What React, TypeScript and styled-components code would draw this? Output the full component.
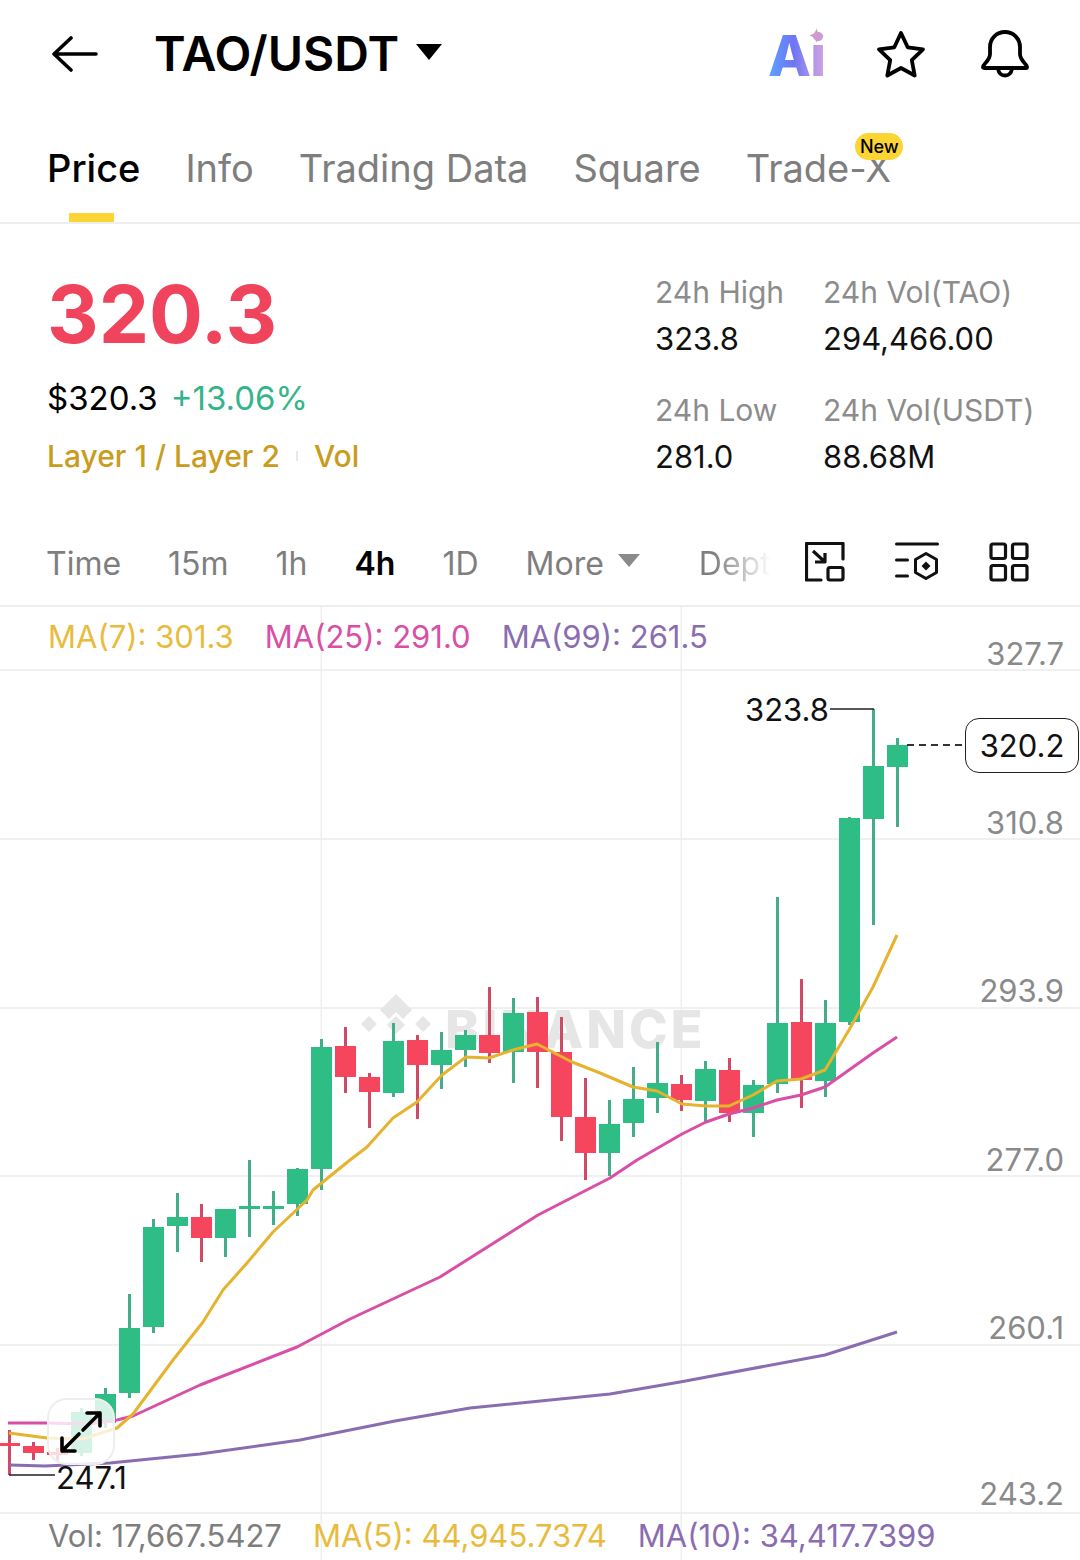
import styled, { createGlobalStyle } from "styled-components";

const GREEN = "#2EBD85";
const RED = "#F6465D";
const GREY = "#7E7E7E";

const GlobalStyle = createGlobalStyle`
  html, body {
    margin: 0;
    padding: 0;
    background: #fff;
  }
  * {
    box-sizing: border-box;
  }
`;

// top, bottom of the body, top, bottom of the wick, colour
type Candle = [number, number, number, number, "g" | "r"];

const candles: Candle[] = [
  [1443, 1446, 1430, 1475, "r"],
  [1446, 1453, 1442, 1460, "r"],
  [1452, 1455, 1448, 1462, "r"],
  [1412, 1453, 1408, 1456, "g"],
  [1394, 1423, 1388, 1428, "g"],
  [1328, 1393, 1294, 1398, "g"],
  [1227, 1327, 1219, 1333, "g"],
  [1217, 1226, 1193, 1252, "g"],
  [1217, 1238, 1204, 1262, "r"],
  [1209, 1238, 1209, 1257, "g"],
  [1206, 1209, 1160, 1237, "g"],
  [1206, 1209, 1191, 1225, "g"],
  [1169, 1204, 1168, 1216, "g"],
  [1047, 1169, 1039, 1190, "g"],
  [1046, 1077, 1027, 1093, "r"],
  [1077, 1092, 1073, 1128, "r"],
  [1041, 1093, 1023, 1097, "g"],
  [1040, 1065, 1035, 1119, "r"],
  [1050, 1065, 1032, 1089, "g"],
  [1035, 1050, 1030, 1067, "g"],
  [1035, 1053, 987, 1063, "r"],
  [1013, 1052, 998, 1083, "g"],
  [1012, 1052, 997, 1088, "r"],
  [1052, 1117, 1017, 1141, "r"],
  [1117, 1153, 1078, 1180, "r"],
  [1124, 1153, 1100, 1176, "g"],
  [1099, 1123, 1067, 1137, "g"],
  [1083, 1098, 1042, 1113, "g"],
  [1084, 1100, 1075, 1111, "r"],
  [1069, 1101, 1061, 1122, "g"],
  [1070, 1113, 1058, 1122, "r"],
  [1085, 1113, 1080, 1137, "g"],
  [1023, 1084, 897, 1093, "g"],
  [1022, 1080, 979, 1108, "r"],
  [1023, 1081, 1000, 1097, "g"],
  [818, 1022, 817, 1025, "g"],
  [766, 819, 709, 925, "g"],
  [745, 767, 738, 827, "g"],
];

const ma7 =
  "9,1433 47,1438 82,1439 117,1428 133,1414 173,1360 203,1322 223,1290 247,1263 273,1232 307,1200 313,1190 350,1160 367,1147 393,1118 417,1102 442,1075 466,1057 489,1058 513,1050 537,1044 572,1062 600,1073 633,1087 657,1091 682,1104 706,1106 729,1106 753,1095 777,1081 801,1079 825,1070 849,1030 873,987 897,935";
const ma25 =
  "8,1423 45,1423 90,1424 117,1420 133,1416 200,1385 297,1347 350,1319 440,1277 538,1215 610,1178 637,1160 682,1134 706,1122 729,1114 753,1108 777,1100 801,1095 825,1087 849,1070 873,1053 897,1037";
const ma99 =
  "10,1465 45,1466 110,1463 200,1454 300,1440 395,1421 470,1408 610,1394 680,1382 825,1355 897,1332";

const gridRows = [670, 839, 1008, 1176, 1345, 1513];
const gridCols = [321, 681];

const axisLabels = [
  { y: 654, text: "327.7" },
  { y: 823, text: "310.8" },
  { y: 991, text: "293.9" },
  { y: 1160, text: "277.0" },
  { y: 1328, text: "260.1" },
  { y: 1494, text: "243.2" },
];

const intervals = [
  { label: "Time" },
  { label: "15m" },
  { label: "1h" },
  { label: "4h", active: true },
  { label: "1D" },
];

const App = () => {
  return (
    <Page>
      <GlobalStyle />
      <Header>
        <BackIcon viewBox="0 0 46 36" fill="none">
          <path
            d="M44 18H2M19 2 2 18l17 16"
            stroke="#000"
            strokeWidth="3.6"
            strokeLinecap="round"
            strokeLinejoin="round"
          />
        </BackIcon>
        <Title>TAO/USDT</Title>
        <Caret />
        <HeaderIcons>
          <AiBadge>
            <AiText>Ai</AiText>
            <Sparkle viewBox="0 0 16 16">
              <path
                d="M8 0c.8 4.4 2.6 6.6 8 8-5.4 1.400-7.200 3.600-8 8-.8-4.400-2.600-6.600-8-8 5.400-1.400 7.200-3.600 8-8Z"
                fill="#D49BC8"
              />
            </Sparkle>
          </AiBadge>
          <HeaderIcon viewBox="0 0 54 54" fill="none">
            <path
              d="M27 6l6.700 14.300 15.300 2-11.200 10.800 2.900 15.400L27 41l-13.700 7.500 2.900-15.400L5 22.300l15.300-2L27 6Z"
              stroke="#000"
              strokeWidth="3.800"
              strokeLinejoin="round"
            />
          </HeaderIcon>
          <HeaderIcon viewBox="0 0 54 54" fill="none">
            <path
              d="M5 40c0-1.500 1-2.400 2.500-4 2.200-2.400 4.500-5 4.500-9v-7C12 11.500 18.500 5 27 5s15 6.500 15 15v7c0 4 2.300 6.600 4.500 9 1.500 1.600 2.500 2.500 2.500 4 0 .6-.4 1-1 1H6c-.6 0-1-.4-1-1Z"
              stroke="#000"
              strokeWidth="3.800"
              strokeLinejoin="round"
            />
            <path
              d="M20 42c.8 4 3.400 6.500 7 6.500s6.200-2.500 7-6.500"
              stroke="#000"
              strokeWidth="3.800"
            />
          </HeaderIcon>
        </HeaderIcons>
      </Header>

      <Tabs>
        <Tab $active>Price</Tab>
        <Tab>Info</Tab>
        <Tab>Trading Data</Tab>
        <Tab>Square</Tab>
        <Tab>
          Trade-X
          <NewBadge>New</NewBadge>
        </Tab>
      </Tabs>

      <Summary>
        <SummaryLeft>
          <LastPrice>320.3</LastPrice>
          <FiatRow>
            <span>$320.3</span>
            <Change>+13.06%</Change>
          </FiatRow>
          <TagRow>
            <span>Layer 1 / Layer 2</span>
            <TagDivider />
            <span>Vol</span>
          </TagRow>
        </SummaryLeft>
        <StatsGrid>
          <Stat>
            <StatLabel>24h High</StatLabel>
            <StatValue>323.8</StatValue>
          </Stat>
          <Stat>
            <StatLabel>24h Vol(TAO)</StatLabel>
            <StatValue>294,466.00</StatValue>
          </Stat>
          <Stat>
            <StatLabel>24h Low</StatLabel>
            <StatValue>281.0</StatValue>
          </Stat>
          <Stat>
            <StatLabel>24h Vol(USDT)</StatLabel>
            <StatValue>88.68M</StatValue>
          </Stat>
        </StatsGrid>
      </Summary>

      <IntervalBar>
        <Intervals>
          {intervals.map((item) => (
            <Interval key={item.label} $active={item.active}>
              {item.label}
            </Interval>
          ))}
          <Interval>
            More
            <MoreCaret />
          </Interval>
          <DepthLabel>Dept</DepthLabel>
        </Intervals>
        <ToolIcons>
          <ToolIcon viewBox="0 0 40 40" fill="none">
            <path
              d="M38 17V1.500H1.500V38H16"
              stroke="#111"
              strokeWidth="3.200"
              strokeLinecap="round"
              strokeLinejoin="round"
            />
            <rect x="23" y="25.500" width="15" height="12.500" rx="2" stroke="#111" strokeWidth="3.200" />
            <path
              d="M8 9l12 11M20 11v9H10"
              stroke="#111"
              strokeWidth="3.200"
              strokeLinejoin="round"
            />
          </ToolIcon>
          <ToolIcon viewBox="0 0 44 40" $width={44} fill="none">
            <path
              d="M1.500 2h41M1.500 18h11M1.500 34h11"
              stroke="#111"
              strokeWidth="3"
              strokeLinecap="round"
            />
            <path
              d="M31 11.500l10.500 6v13L31 36.500l-10.500-6v-13L31 11.500Z"
              stroke="#111"
              strokeWidth="3"
              strokeLinejoin="round"
            />
            <path d="M31 19.500l4.500 4.500-4.500 4.500-4.500-4.500 4.500-4.500Z" fill="#111" />
          </ToolIcon>
          <ToolIcon viewBox="0 0 40 40" fill="none">
            <rect x="2" y="2" width="14.500" height="14.500" rx="2" stroke="#111" strokeWidth="3.200" />
            <rect x="23.500" y="2" width="14.500" height="14.500" rx="2" stroke="#111" strokeWidth="3.200" />
            <rect x="2" y="23.500" width="14.500" height="14.500" rx="2" stroke="#111" strokeWidth="3.200" />
            <rect x="23.500" y="23.500" width="14.500" height="14.500" rx="2" stroke="#111" strokeWidth="3.200" />
          </ToolIcon>
        </ToolIcons>
      </IntervalBar>

      <ChartSection>
        <ChartCanvas viewBox="0 605 1080 955" fill="none">
          <rect x="0" y="605" width="1080" height="2" fill="#EEEEEE" />
          {gridRows.map((y) => (
            <rect key={y} x="0" y={y - 1} width="1080" height="2" fill="#F0F0F0" />
          ))}
          {gridCols.map((x) => (
            <rect key={x} x={x - 0.5} y="607" width="1.500" height="953" fill="#EFEFEF" />
          ))}

          <g fill="#E6E6E6">
            <path d="M396 994l16 16-9 9-7-7-7 7-9-9 16-16Z" />
            <path d="M396 1016l9 9-9 9-9-9 9-9Z" />
            <path d="M369 1016l8 8-8 8-8-8 8-8Z" />
            <path d="M423 1016l8 8-8 8-8-8 8-8Z" />
            <path d="M382 1037l7 7 7-7 7 7 7-7 0 0 9 9-23 0-23 0 9-9Z" opacity="0" />
          </g>
          <Watermark x="445" y="1048">
            BINANCE
          </Watermark>

          {candles.map(([top, bottom, wickTop, wickBottom, side], i) => {
            const cx = 9.5 + i * 24;
            return (
              <g key={i}>
                <rect
                  x={cx - 1.5}
                  y={wickTop}
                  width="3"
                  height={wickBottom - wickTop}
                  fill={side === "g" ? "#43AD8A" : "#CF4A66"}
                />
                <rect
                  x={cx - 10.5}
                  y={top}
                  width="21"
                  height={bottom - top}
                  fill={side === "g" ? GREEN : RED}
                />
              </g>
            );
          })}

          <polyline points={ma99} stroke="#8A6DB1" strokeWidth="3" strokeLinejoin="round" />
          <polyline points={ma25} stroke="#D94FA6" strokeWidth="3" strokeLinejoin="round" />
          <polyline points={ma7} stroke="#E6B32F" strokeWidth="3" strokeLinejoin="round" />

          <path d="M830 709h44M9 1475h46" stroke="#222" strokeWidth="1.500" />
          <path d="M907 745h56" stroke="#333" strokeWidth="2" strokeDasharray="7 5" />

          {axisLabels.map((item) => (
            <AxisText key={item.text} x="1064" y={item.y + 11}>
              {item.text}
            </AxisText>
          ))}
          <MarkText x="745" y="721">
            323.8
          </MarkText>
          <MarkText x="56" y="1489">
            247.1
          </MarkText>
        </ChartCanvas>

        <Legend>
          <LegendItem $color="#E9BB3C">MA(7): 301.3</LegendItem>
          <LegendItem $color="#D94FA6">MA(25): 291.0</LegendItem>
          <LegendItem $color="#8A6DB1">MA(99): 261.5</LegendItem>
        </Legend>

        <LastTag>320.2</LastTag>

        <ExpandButton>
          <svg width="48" height="48" viewBox="0 0 48 48" fill="none">
            <path
              d="M26 22 43 5M30 5h13v13M5 43l17-17M5 30v13h13"
              stroke="#000"
              strokeWidth="3.600"
              strokeLinecap="round"
              strokeLinejoin="round"
            />
          </svg>
        </ExpandButton>

        <VolumeRow>
          <LegendItem $color={GREY}>Vol: 17,667.5427</LegendItem>
          <LegendItem $color="#E9BB3C">MA(5): 44,945.7374</LegendItem>
          <LegendItem $color="#8A6DB1">MA(10): 34,417.7399</LegendItem>
        </VolumeRow>
      </ChartSection>
    </Page>
  );
};

export default App;

const Page = styled.div`
  display: flex;
  flex-direction: column;
  width: 1080px;
  height: 1560px;
  overflow: hidden;
  background: #fff;
  font-family: Inter, "Liberation Sans", sans-serif;
  color: #000;
`;

const Header = styled.header`
  display: flex;
  align-items: center;
  height: 108px;
  padding: 0 48px 0 52px;
`;

const BackIcon = styled.svg`
  width: 46px;
  height: 36px;
  flex-shrink: 0;
`;

const Title = styled.h1`
  margin: 0 0 0 56px;
  font-size: 48px;
  font-weight: 600;
  line-height: 60px;
`;

const Caret = styled.span`
  width: 0;
  height: 0;
  margin: -4px 0 0 17px;
  border-left: 13px solid transparent;
  border-right: 13px solid transparent;
  border-top: 16px solid #000;
`;

const HeaderIcons = styled.div`
  display: flex;
  align-items: center;
  gap: 50px;
  margin-left: auto;
`;

const AiBadge = styled.div`
  position: relative;
  width: 56px;
  height: 54px;
  display: flex;
  align-items: flex-end;
`;

const AiText = styled.span`
  font-size: 56px;
  font-weight: 800;
  line-height: 50px;
  letter-spacing: -1px;
  background: linear-gradient(90deg, #5aa4ff 0%, #6f74f5 45%, #b79be8 85%, #d7a0d8 100%);
  -webkit-background-clip: text;
  background-clip: text;
  color: transparent;
`;

const Sparkle = styled.svg`
  position: absolute;
  right: 0;
  top: 1px;
  width: 15px;
  height: 15px;
`;

const HeaderIcon = styled.svg`
  width: 54px;
  height: 54px;
`;

const Tabs = styled.nav`
  display: flex;
  gap: 45px;
  height: 116px;
  padding: 37px 0 0 47px;
  border-bottom: 2px solid #eeeeee;
`;

const Tab = styled.div<{ $active?: boolean }>`
  position: relative;
  height: 77px;
  font-size: 38px;
  font-weight: ${({ $active }) => ($active ? 500 : 400)};
  line-height: 46px;
  color: ${({ $active }) => ($active ? "#000" : GREY)};

  &::after {
    content: "";
    display: ${({ $active }) => ($active ? "block" : "none")};
    position: absolute;
    left: 22px;
    bottom: 0;
    width: 45px;
    height: 9px;
    background: #fcd535;
  }
`;

const NewBadge = styled.span`
  position: absolute;
  right: -12px;
  top: -12px;
  width: 48px;
  height: 27px;
  border-radius: 14px;
  background: #fcd535;
  color: #000;
  font-size: 18px;
  font-weight: 500;
  line-height: 27px;
  text-align: center;
`;

const Summary = styled.section`
  display: flex;
  height: 298px;
  padding-left: 47px;
`;

const SummaryLeft = styled.div`
  width: 608px;
  padding-top: 50px;
`;

const LastPrice = styled.div`
  font-size: 80px;
  font-weight: 700;
  line-height: 80px;
  color: #f0435c;
`;

const FiatRow = styled.div`
  display: flex;
  gap: 13px;
  margin-top: 22px;
  font-size: 33px;
  line-height: 44px;
`;

const Change = styled.span`
  color: #34b48a;
`;

const TagRow = styled.div`
  display: flex;
  align-items: center;
  margin-top: 14px;
  font-size: 30px;
  font-weight: 500;
  line-height: 44px;
  color: #c99c1e;
`;

const TagDivider = styled.span`
  width: 2px;
  height: 10px;
  margin: 0 16px;
  background: #e8e8e8;
`;

const StatsGrid = styled.div`
  display: grid;
  grid-template-columns: 168px auto;
  grid-auto-rows: 118px;
  padding-top: 46px;
`;

const Stat = styled.div`
  display: flex;
  flex-direction: column;
  gap: 3px;
`;

const StatLabel = styled.span`
  font-size: 30px;
  line-height: 44px;
  color: #8c8c8c;
  white-space: nowrap;
`;

const StatValue = styled.span`
  font-size: 31px;
  line-height: 44px;
  color: #111;
`;

const IntervalBar = styled.div`
  display: flex;
  align-items: center;
  height: 83px;
  padding: 0 49px 0 46px;
`;

const Intervals = styled.div`
  display: flex;
  align-items: center;
  gap: 47px;
  width: 759px;
  overflow: hidden;
`;

const Interval = styled.span<{ $active?: boolean }>`
  display: flex;
  align-items: center;
  font-size: 32px;
  font-weight: ${({ $active }) => ($active ? 600 : 400)};
  color: ${({ $active }) => ($active ? "#000" : GREY)};
`;

const MoreCaret = styled.i`
  width: 0;
  height: 0;
  margin: -6px 0 0 14px;
  border-left: 11px solid transparent;
  border-right: 11px solid transparent;
  border-top: 13px solid #8a8a8a;
`;

const DepthLabel = styled.span`
  margin-left: 12px;
  font-size: 32px;
  background: linear-gradient(90deg, #7e7e7e 20%, #fff 100%);
  -webkit-background-clip: text;
  background-clip: text;
  color: transparent;
`;

const ToolIcons = styled.div`
  display: flex;
  align-items: center;
  gap: 50px;
  margin-top: -4px;
`;

const ToolIcon = styled.svg<{ $width?: number }>`
  width: ${({ $width }) => $width ?? 40}px;
  height: 40px;
`;

const ChartSection = styled.section`
  position: relative;
  flex: 1;
  display: flex;
  flex-direction: column;
  justify-content: space-between;
`;

const ChartCanvas = styled.svg`
  position: absolute;
  inset: 0;
  width: 100%;
  height: 100%;
`;

const Watermark = styled.text`
  font-family: Inter, "Liberation Sans", sans-serif;
  font-size: 52px;
  font-weight: 800;
  letter-spacing: 3px;
  fill: #e6e6e6;
`;

const AxisText = styled.text`
  font-family: Inter, "Liberation Sans", sans-serif;
  font-size: 31px;
  fill: #8a8a8a;
  text-anchor: end;
`;

const MarkText = styled.text`
  font-family: Inter, "Liberation Sans", sans-serif;
  font-size: 31px;
  fill: #111;
`;

const Legend = styled.div`
  position: relative;
  display: flex;
  gap: 31px;
  padding: 10px 0 0 48px;
  height: 64px;
`;

const LegendItem = styled.span<{ $color: string }>`
  font-size: 31px;
  line-height: 44px;
  color: ${({ $color }) => $color};
  white-space: nowrap;
`;

const LastTag = styled.div`
  position: absolute;
  left: 965px;
  top: 113px;
  width: 114px;
  height: 55px;
  border: 1.5px solid #222;
  border-radius: 14px;
  background: #fff;
  font-size: 31px;
  line-height: 54px;
  text-align: center;
  color: #111;
`;

const ExpandButton = styled.div`
  position: absolute;
  left: 47px;
  top: 793px;
  display: flex;
  align-items: center;
  justify-content: center;
  width: 68px;
  height: 67px;
  border: 2px solid #eeeeee;
  border-radius: 20px;
  background: rgba(255, 255, 255, 0.8);
`;

const VolumeRow = styled.div`
  position: relative;
  display: flex;
  gap: 31px;
  height: 46px;
  padding-left: 48px;
`;
